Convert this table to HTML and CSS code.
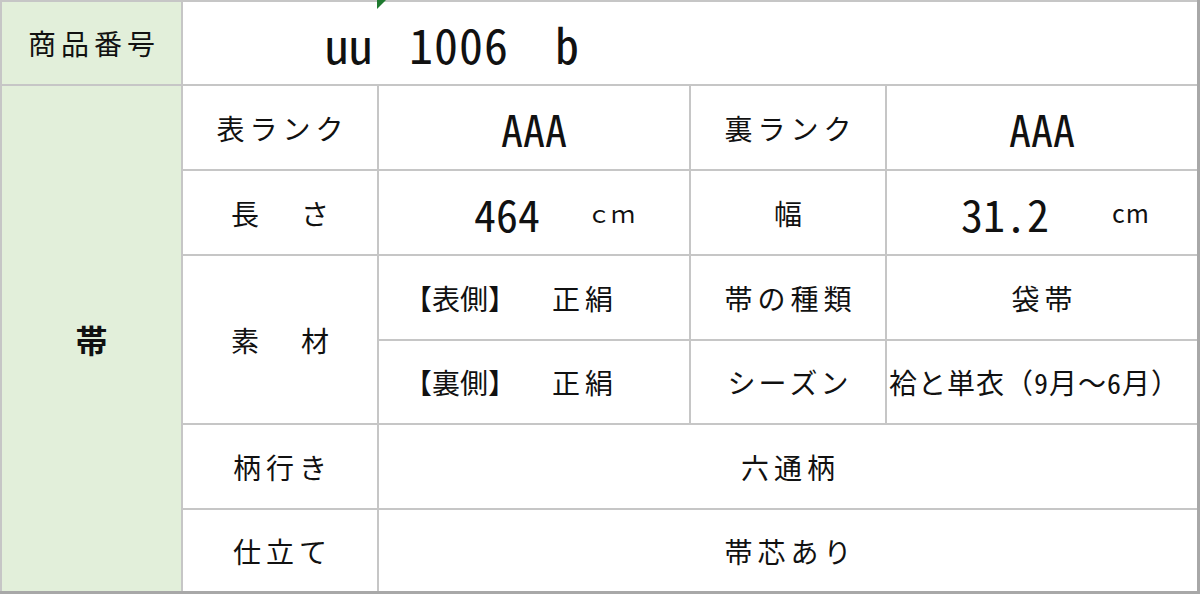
FILE: index.html
```html
<!DOCTYPE html>
<html lang="ja">
<head>
<meta charset="utf-8">
<title>商品情報</title>
<link rel="stylesheet" href="styles.css">
</head>
<body>
<div class="sheet">
  <div class="cell green label">商品番号</div>
  <div class="cell code"><span>uu</span><span class="code-num">1006</span><span class="code-suffix">b</span></div>

  <div class="cell green obi">帯</div>

  <div class="cell label">表ランク</div>
  <div class="cell big">AAA</div>
  <div class="cell label">裏ランク</div>
  <div class="cell big">AAA</div>

  <div class="cell label wide-space">長　さ</div>
  <div class="cell measure len"><span class="big-num">464</span><span class="unit">ｃｍ</span></div>
  <div class="cell label">幅</div>
  <div class="cell measure wid"><span class="big-num">31.2</span><span class="unit-half">cm</span></div>

  <div class="cell label wide-space sozai">素　材</div>
  <div class="cell side"><span>【表側】</span><span class="silk">正絹</span></div>
  <div class="cell label">帯の種類</div>
  <div class="cell label">袋帯</div>

  <div class="cell side"><span>【裏側】</span><span class="silk">正絹</span></div>
  <div class="cell label narrow">シーズン</div>
  <div class="cell season">袷と単衣（9月～6月）</div>

  <div class="cell label">柄行き</div>
  <div class="cell label span3">六通柄</div>

  <div class="cell label">仕立て</div>
  <div class="cell label span3">帯芯あり</div>

  <svg class="marker" width="9" height="9" viewBox="0 0 9 9"><polygon points="0,0 9,0 0,9" fill="#1f7a30"/></svg>
</div>
</body>
</html>
```
FILE: styles.css
```css
html, body {
  margin: 0;
  padding: 0;
  background: #ffffff;
}

.sheet {
  position: relative;
  box-sizing: border-box;
  width: 1200px;
  height: 594px;
  display: grid;
  grid-template-columns: 179px 194px 310px 194px 310px;
  grid-template-rows: 82px 83px 83px 83px 82px 83px 81px;
  gap: 2px;
  padding: 2px 0 0 2px;
  background: #c6c6c6;
  border-right: 3px solid #a8a8a8;
  border-bottom: 3px solid #a8a8a8;
  font-family: "Noto Sans Mono CJK JP", "Noto Sans CJK JP", monospace;
  color: #111111;
}

.cell {
  background: #ffffff;
  display: flex;
  align-items: center;
  justify-content: center;
  font-size: 28px;
  line-height: 1;
  white-space: nowrap;
}

.green {
  background: #e2efda;
}

.label {
  letter-spacing: 5px;
  padding-left: 5px;
}

.wide-space {
  letter-spacing: 7px;
  padding-left: 7px;
}

.narrow {
  letter-spacing: 3px;
  padding-left: 3px;
}

.code {
  grid-column: span 4;
  justify-content: flex-start;
  padding-left: 142px;
  font-size: 48px;
}

.code-num {
  margin-left: 36px;
  letter-spacing: 1px;
}

.code-suffix {
  margin-left: 46px;
}

.obi {
  grid-row: span 6;
  font-family: "Noto Sans CJK JP", sans-serif;
  font-weight: 700;
  font-size: 32px;
}

.big {
  font-size: 44px;
}

.measure {
  justify-content: flex-start;
}

.len {
  padding-left: 95px;
}

.wid {
  padding-left: 74px;
}

.big-num {
  font-size: 44px;
}

.unit {
  font-size: 24px;
}

.unit-half {
  font-family: "Noto Sans CJK JP", sans-serif;
  font-size: 25px;
  letter-spacing: 1px;
}

.len .unit {
  margin-left: 47px;
}

.wid .unit-half {
  margin-left: 63px;
}

.sozai {
  grid-row: span 2;
}

.side {
  justify-content: flex-start;
  padding-left: 25px;
}

.silk {
  margin-left: 36px;
  letter-spacing: 5px;
}

.season {
  justify-content: flex-start;
  padding-left: 2px;
  letter-spacing: 1px;
}

.span3 {
  grid-column: span 3;
}

.marker {
  position: absolute;
  left: 377px;
  top: 0;
}
```
